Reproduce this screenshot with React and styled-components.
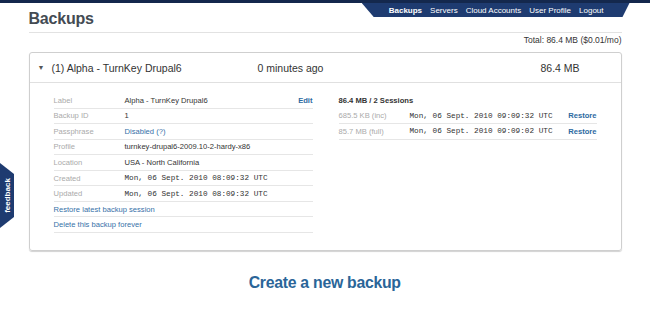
import React from "react";
import styled, { createGlobalStyle } from "styled-components";

const Global = createGlobalStyle`
  html, body { margin: 0; padding: 0; background: #fff; }
  body { font-family: "Liberation Sans", Arial, sans-serif; color: #333; }
  *, *::before, *::after { box-sizing: border-box; }
`;

const TopLine = styled.div`
  height: 3px;
  background: #14284d;
`;

const Page = styled.div`
  width: 593px;
  margin: 0 auto;
`;

const Header = styled.header`
  display: flex;
  justify-content: space-between;
  align-items: flex-start;
  border-bottom: 1px solid #e2e2e2;
  height: 30px;
`;

const Title = styled.h1`
  margin: 7px 0 0;
  font-size: 16px;
  font-weight: bold;
  color: #444b53;
  letter-spacing: -0.2px;
`;

const Nav = styled.nav`
  display: flex;
  gap: 8px;
  align-items: center;
  height: 14px;
  margin-right: -8px;
  padding: 0 26px 0 27px;
  background: #1e3b70;
  clip-path: polygon(0 0, 100% 0, calc(100% - 7px) 100%, 12px 100%);
`;

const NavLink = styled.a`
  color: #fff;
  font-size: 8px;
  font-weight: ${(p) => (p.$active ? "bold" : "normal")};
  text-decoration: none;
  white-space: nowrap;
`;

const Total = styled.div`
  text-align: right;
  font-size: 8.5px;
  color: #333;
  padding: 2px 0 0;
  height: 19px;
`;

const Card = styled.section`
  border: 1px solid #cfcfcf;
  border-radius: 3px;
  box-shadow: 0 1px 1px rgba(0, 0, 0, 0.18);
  height: 199px;
`;

const CardHead = styled.div`
  display: grid;
  grid-template-columns: 14px 206px 283px 1fr;
  align-items: center;
  height: 30px;
  padding-left: 8px;
  border-bottom: 1px solid #e0e0e0;
  font-size: 10.5px;
  color: #333;
`;

const Caret = styled.span`
  font-size: 7px;
  color: #555;
`;

const CardBody = styled.div`
  display: grid;
  grid-template-columns: 259px 258px;
  justify-content: space-between;
  padding: 10px 24px 0;
`;

const Table = styled.div`
  display: flex;
  flex-direction: column;
`;

const Row = styled.div`
  display: grid;
  grid-template-columns: ${(p) => p.$cols || "71px 1fr auto"};
  align-items: center;
  height: 15.55px;
  border-bottom: 1px solid ${(p) => (p.$plain ? "transparent" : "#e6e6e6")};
  font-size: 7.6px;
`;

const Label = styled.span`
  color: #aaa;
`;

const Value = styled.span`
  color: #333;
`;

const Mono = styled.span`
  font-family: "Liberation Mono", "DejaVu Sans Mono", monospace;
  font-size: 7.7px;
  color: #333;
`;

const Link = styled.a`
  color: ${(p) => (p.$bold ? "#2d6aa1" : "#3670a8")};
  text-decoration: none;
  font-weight: ${(p) => (p.$bold ? "bold" : "normal")};
`;

const Heading = styled.span`
  font-weight: bold;
  color: #333;
`;

const Create = styled.div`
  text-align: center;
  padding-top: 22px;
`;

const CreateLink = styled.a`
  display: inline-block;
  font-size: 17px;
  font-weight: bold;
  color: #2a6598;
  text-decoration: none;
  letter-spacing: -0.3px;
  transform: scaleX(0.93);
`;

const Feedback = styled.div`
  position: fixed;
  left: 0;
  top: 163px;
  width: 14px;
  height: 65px;
  background: #1e3b70;
  clip-path: polygon(0 0, 100% 11px, 100% calc(100% - 11px), 0 100%);
  display: flex;
  align-items: center;
  justify-content: center;
`;

const FeedbackText = styled.span`
  transform: rotate(-90deg);
  color: #fff;
  font-size: 8px;
  font-weight: bold;
  white-space: nowrap;
`;

const details = [
  ["Label", <Value>Alpha - TurnKey Drupal6</Value>, <Link $bold>Edit</Link>],
  ["Backup ID", <Value>1</Value>],
  ["Passphrase", <Link>Disabled (?)</Link>],
  ["Profile", <Value>turnkey-drupal6-2009.10-2-hardy-x86</Value>],
  ["Location", <Value>USA - North California</Value>],
  ["Created", <Mono>Mon, 06 Sept. 2010 08:09:32 UTC</Mono>],
  ["Updated", <Mono>Mon, 06 Sept. 2010 08:09:32 UTC</Mono>],
];

const sessions = [
  ["685.5 KB (inc)", "Mon, 06 Sept. 2010 09:09:32 UTC"],
  ["85.7 MB (full)", "Mon, 06 Sept. 2010 09:09:02 UTC"],
];

export default function App() {
  return (
    <>
      <Global />
      <TopLine />
      <Page>
        <Header>
          <Title>Backups</Title>
          <Nav>
            <NavLink $active>Backups</NavLink>
            <NavLink>Servers</NavLink>
            <NavLink>Cloud Accounts</NavLink>
            <NavLink>User Profile</NavLink>
            <NavLink>Logout</NavLink>
          </Nav>
        </Header>
        <Total>Total: 86.4 MB ($0.01/mo)</Total>
        <Card>
          <CardHead>
            <Caret>▼</Caret>
            <span>(1) Alpha - TurnKey Drupal6</span>
            <span>0 minutes ago</span>
            <span>86.4 MB</span>
          </CardHead>
          <CardBody>
            <Table>
              {details.map(([l, v, a]) => (
                <Row key={l}>
                  <Label>{l}</Label>
                  {v}
                  {a || <span />}
                </Row>
              ))}
              <Row $cols="1fr">
                <Link>Restore latest backup session</Link>
              </Row>
              <Row $cols="1fr">
                <Link>Delete this backup forever</Link>
              </Row>
            </Table>
            <Table>
              <Row $cols="1fr" $plain>
                <Heading>86.4 MB / 2 Sessions</Heading>
              </Row>
              {sessions.map(([s, d]) => (
                <Row key={s}>
                  <Label>{s}</Label>
                  <Mono>{d}</Mono>
                  <Link $bold>Restore</Link>
                </Row>
              ))}
            </Table>
          </CardBody>
        </Card>
        <Create>
          <CreateLink>Create a new backup</CreateLink>
        </Create>
      </Page>
      <Feedback>
        <FeedbackText>feedback</FeedbackText>
      </Feedback>
    </>
  );
}
